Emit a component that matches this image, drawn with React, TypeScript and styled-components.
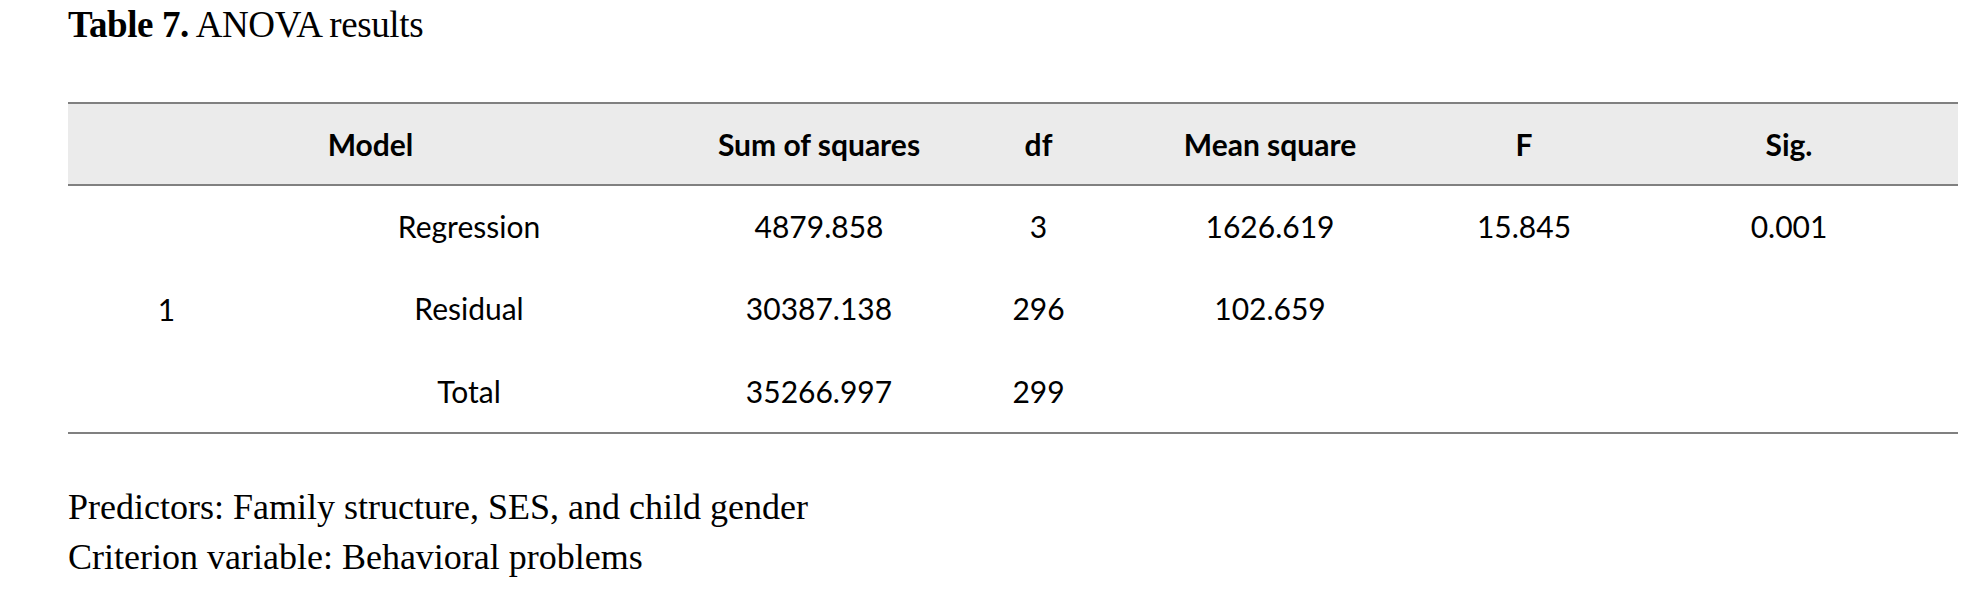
import styled, { createGlobalStyle } from 'styled-components';

const GlobalStyle = createGlobalStyle`
  html, body {
    margin: 0;
    padding: 0;
    background: #fff;
  }
`;

const columns = [197, 408, 292, 147, 316, 192, 338];

const rows = [
  { source: 'Regression', ss: '4879.858', df: '3', ms: '1626.619', f: '15.845', sig: '0.001' },
  { source: 'Residual', ss: '30387.138', df: '296', ms: '102.659', f: '', sig: '' },
  { source: 'Total', ss: '35266.997', df: '299', ms: '', f: '', sig: '' },
];

export default function App() {
  return (
    <Page>
      <GlobalStyle />
      <Caption>
        <strong>Table 7.</strong> ANOVA results
      </Caption>

      <Table>
        <colgroup>
          {columns.map((w, i) => (
            <col key={i} style={{ width: w }} />
          ))}
        </colgroup>
        <thead>
          <tr>
            <HeadCell colSpan={2}>Model</HeadCell>
            <HeadCell>Sum of squares</HeadCell>
            <HeadCell>df</HeadCell>
            <HeadCell>Mean square</HeadCell>
            <HeadCell>F</HeadCell>
            <HeadCell>Sig.</HeadCell>
          </tr>
        </thead>
        <tbody>
          {rows.map((r, i) => (
            <BodyRow key={r.source} $last={i === rows.length - 1}>
              {i === 0 && <Cell rowSpan={3}>1</Cell>}
              <Cell>{r.source}</Cell>
              <Cell>{r.ss}</Cell>
              <Cell>{r.df}</Cell>
              <Cell>{r.ms}</Cell>
              <Cell>{r.f}</Cell>
              <Cell>{r.sig}</Cell>
            </BodyRow>
          ))}
        </tbody>
      </Table>

      <Notes>
        <p>Predictors: Family structure, SES, and child gender</p>
        <p>Criterion variable: Behavioral problems</p>
      </Notes>
    </Page>
  );
}

const Page = styled.div`
  padding: 6px 23px 0 68px;
  color: #000;
`;

const Caption = styled.h2`
  margin: 0;
  font-family: 'Liberation Serif', 'Times New Roman', serif;
  font-size: 37px;
  font-weight: normal;
  line-height: 37px;
  letter-spacing: -0.4px;

  strong {
    font-weight: bold;
  }
`;

const Table = styled.table`
  margin-top: 59px;
  width: 1890px;
  table-layout: fixed;
  border-collapse: collapse;
  font-family: Lato, 'Open Sans', sans-serif;
  font-size: 30px;
  color: #000;
`;

const HeadCell = styled.th`
  height: 80px;
  padding: 0;
  background: #ebebeb;
  border-top: 2px solid #808080;
  border-bottom: 2px solid #808080;
  font-weight: bold;
  text-align: center;
  vertical-align: middle;
`;

const BodyRow = styled.tr<{ $last: boolean }>`
  height: ${(p) => (p.$last ? 84 : 82)}px;
`;

const Cell = styled.td`
  padding: 0;
  text-align: center;
  vertical-align: middle;
  border-bottom: 2px solid transparent;

  tr:last-child & ,
  &[rowspan] {
    border-bottom: 2px solid #808080;
  }
`;

const Notes = styled.div`
  margin-top: 48px;
  font-family: 'Liberation Serif', 'Times New Roman', serif;
  font-size: 36px;
  line-height: 50px;

  p {
    margin: 0;
  }
`;
